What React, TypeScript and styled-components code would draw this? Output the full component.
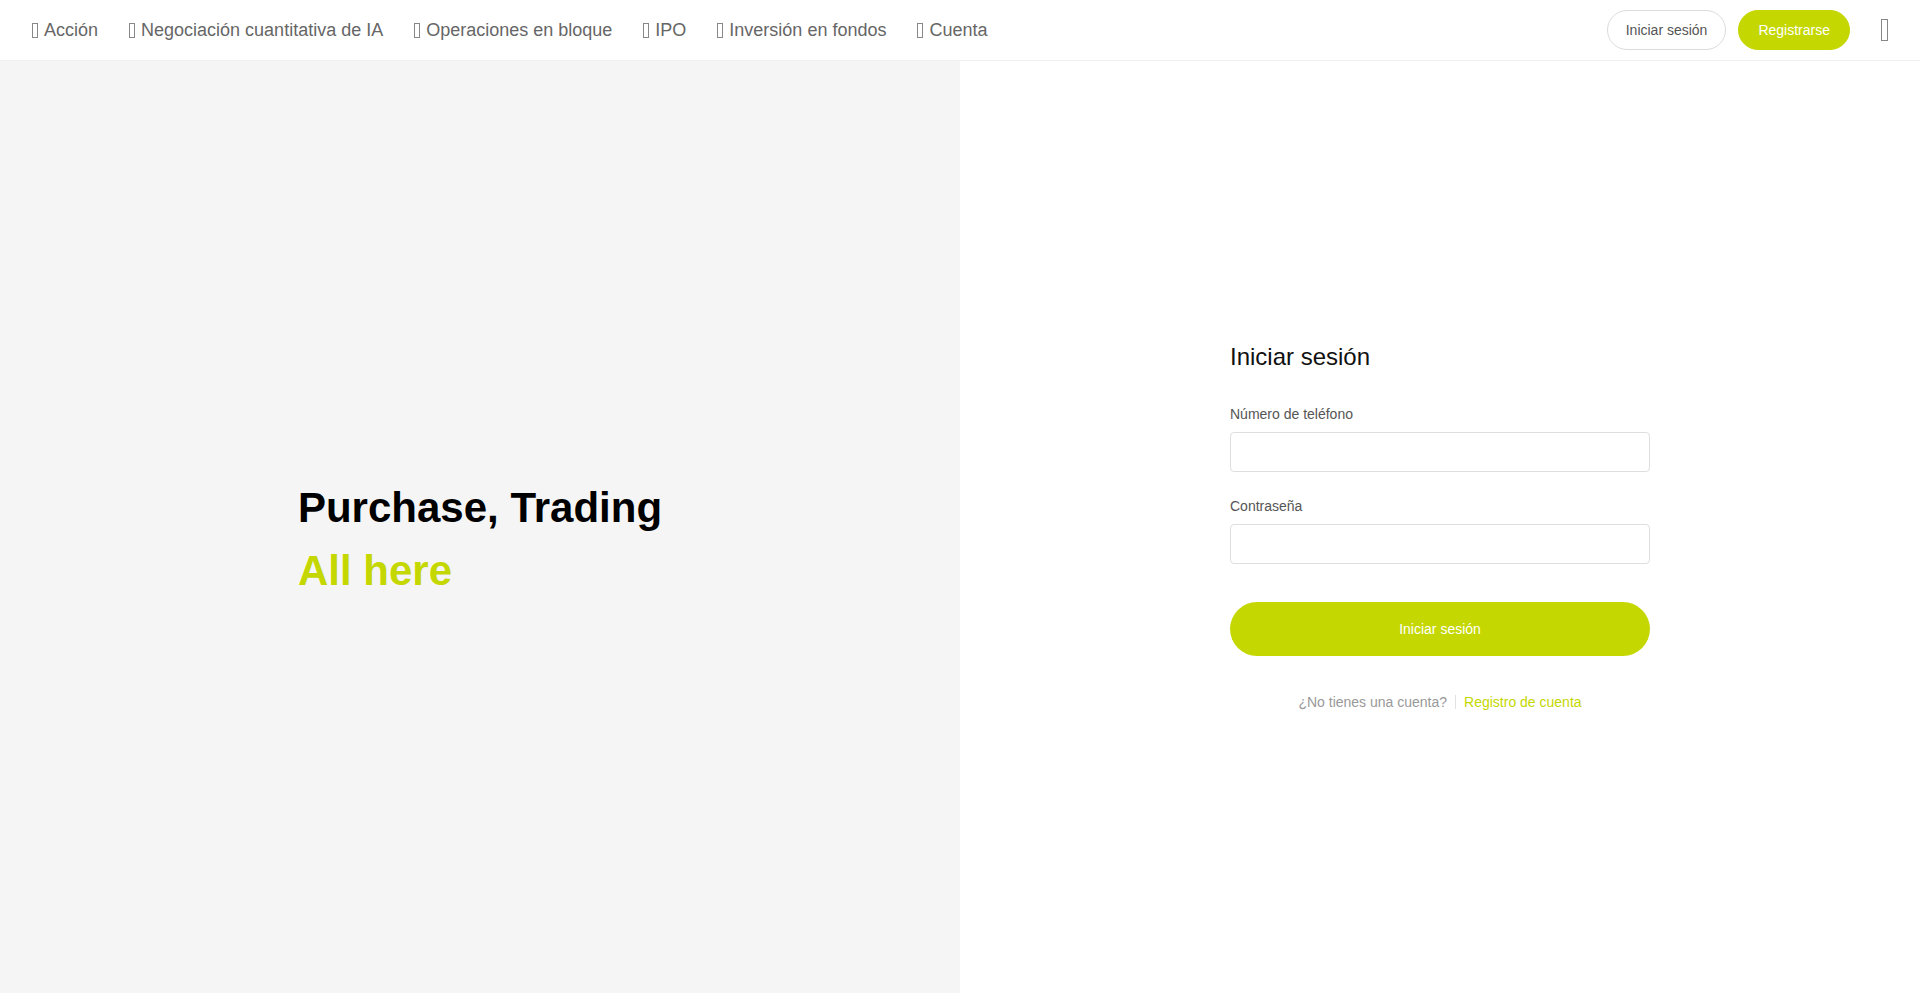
import React from 'react'
import styled, { createGlobalStyle } from 'styled-components'

const GREEN = '#c4d700'

const GlobalStyle = createGlobalStyle`
  html, body {
    margin: 0;
    padding: 0;
    background: #fff;
  }
  body {
    font-family: 'Liberation Sans', Arial, sans-serif;
    color: #333;
  }
  * {
    box-sizing: border-box;
  }
`

const Page = styled.div`
  display: flex;
  flex-direction: column;
  min-height: 100vh;
`

const Header = styled.header`
  display: flex;
  align-items: center;
  justify-content: space-between;
  height: 61px;
  padding: 0 32px;
  border-bottom: 1px solid #efefef;
  background: #fff;
`

const Nav = styled.nav`
  display: flex;
  align-items: center;
  gap: 31px;
`

const NavItem = styled.a`
  display: flex;
  align-items: center;
  gap: 6px;
  font-size: 18px;
  line-height: 24px;
  color: #666;
  text-decoration: none;
  cursor: pointer;
  white-space: nowrap;
`

// missing icon-font glyph, drawn as the empty box the browser shows
const Glyph = styled.span<{ $w: number; $h: number }>`
  display: inline-block;
  width: ${p => p.$w}px;
  height: ${p => p.$h}px;
  border: 1px solid #888;
  flex-shrink: 0;
`

const Actions = styled.div`
  display: flex;
  align-items: center;
  gap: 12px;
`

const PillButton = styled.button<{ $primary?: boolean }>`
  height: 40px;
  padding: 0 ${p => (p.$primary ? 19 : 18)}px;
  border-radius: 20px;
  border: 1px solid ${p => (p.$primary ? GREEN : '#dcdcdc')};
  background: ${p => (p.$primary ? GREEN : '#fff')};
  color: ${p => (p.$primary ? '#fff' : '#555')};
  font-family: inherit;
  font-size: 14px;
  cursor: pointer;
`

const MenuIcon = styled.span`
  display: flex;
  margin-left: 19px;
`

const Main = styled.main`
  display: flex;
  flex: 1;
`

const Hero = styled.section`
  flex: 0 0 50%;
  display: flex;
  align-items: center;
  justify-content: center;
  padding-top: 23px;
  background: #f5f5f5;
`

const HeroText = styled.div`
  display: flex;
  flex-direction: column;
`

const HeroLine = styled.h1<{ $accent?: boolean }>`
  margin: 0;
  font-size: 42px;
  line-height: 63px;
  font-weight: 700;
  color: ${p => (p.$accent ? GREEN : '#000')};
`

const FormPanel = styled.section`
  flex: 0 0 50%;
  display: flex;
  align-items: center;
  justify-content: center;
  padding-bottom: 3px;
  background: #fff;
`

const Form = styled.form`
  width: 420px;
  display: flex;
  flex-direction: column;
`

const Title = styled.h2`
  margin: 0 0 29px;
  font-size: 24px;
  line-height: 36px;
  font-weight: 400;
  color: #111;
`

const Label = styled.label`
  font-size: 14px;
  line-height: 20px;
  color: #555;
  margin-bottom: 8px;
`

const Input = styled.input`
  height: 40px;
  width: 100%;
  border: 1px solid #dedede;
  border-radius: 4px;
  padding: 0 12px;
  font-family: inherit;
  font-size: 14px;
  outline: none;
  margin-bottom: 24px;

  &:last-of-type {
    margin-bottom: 38px;
  }
`

const Submit = styled.button`
  height: 54px;
  border: none;
  border-radius: 27px;
  background: ${GREEN};
  color: #fff;
  font-family: inherit;
  font-size: 14px;
  cursor: pointer;
`

const Footer = styled.div`
  display: flex;
  align-items: center;
  justify-content: center;
  margin-top: 36px;
  font-size: 14px;
  line-height: 20px;
  color: #999;
`

const Divider = styled.span`
  width: 1px;
  height: 14px;
  margin: 0 8px;
  background: #e2e2e2;
`

const Link = styled.a`
  color: ${GREEN};
  text-decoration: none;
  cursor: pointer;
`

const navItems = [
  'Acción',
  'Negociación cuantitativa de IA',
  'Operaciones en bloque',
  'IPO',
  'Inversión en fondos',
  'Cuenta'
]

const App: React.FC = () => (
  <Page>
    <GlobalStyle />
    <Header>
      <Nav>
        {navItems.map(label => (
          <NavItem key={label}>
            <Glyph $w={6} $h={15} />
            {label}
          </NavItem>
        ))}
      </Nav>
      <Actions>
        <PillButton type="button">Iniciar sesión</PillButton>
        <PillButton type="button" $primary>
          Registrarse
        </PillButton>
        <MenuIcon>
          <Glyph $w={7} $h={22} />
        </MenuIcon>
      </Actions>
    </Header>
    <Main>
      <Hero>
        <HeroText>
          <HeroLine>Purchase, Trading</HeroLine>
          <HeroLine $accent>All here</HeroLine>
        </HeroText>
      </Hero>
      <FormPanel>
        <Form onSubmit={e => e.preventDefault()}>
          <Title>Iniciar sesión</Title>
          <Label htmlFor="phone">Número de teléfono</Label>
          <Input id="phone" type="tel" />
          <Label htmlFor="password">Contraseña</Label>
          <Input id="password" type="password" />
          <Submit type="submit">Iniciar sesión</Submit>
          <Footer>
            ¿No tienes una cuenta?
            <Divider />
            <Link>Registro de cuenta</Link>
          </Footer>
        </Form>
      </FormPanel>
    </Main>
  </Page>
)

export default App
